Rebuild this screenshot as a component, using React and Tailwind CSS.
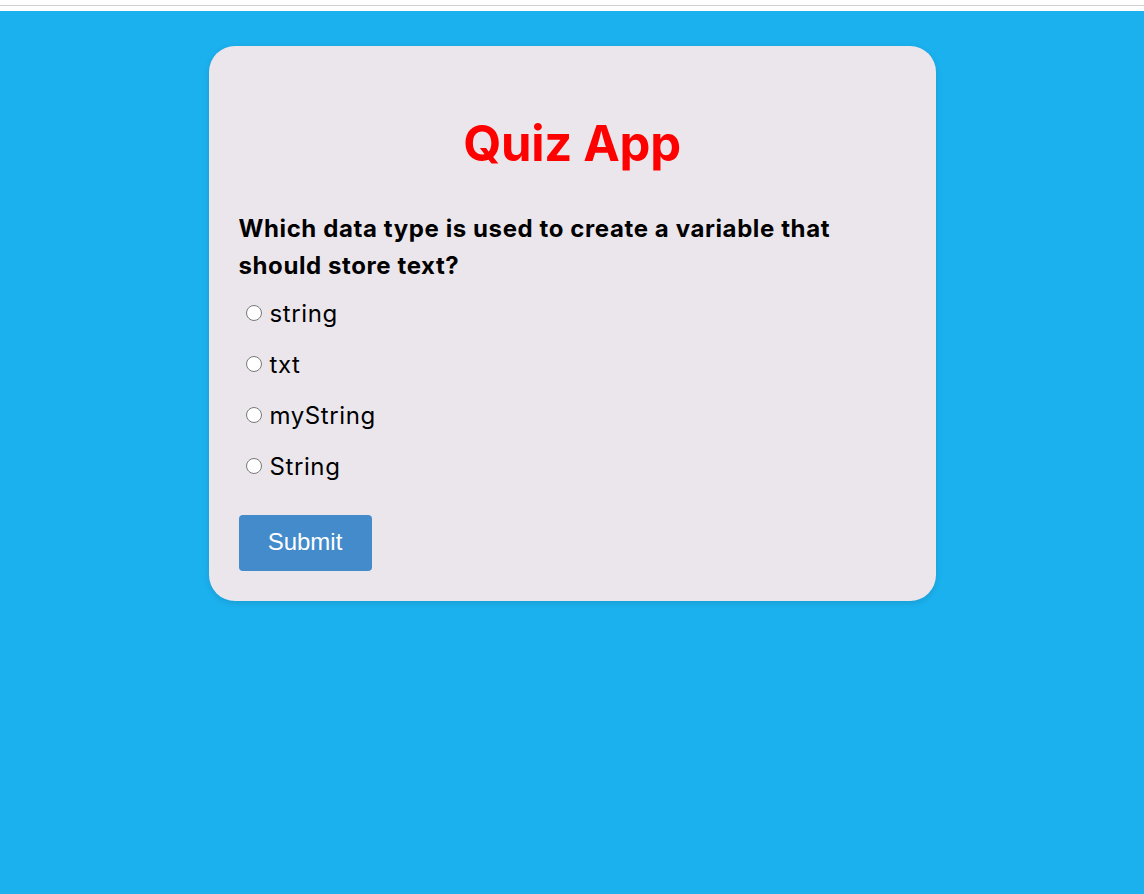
import { useState } from 'react';

const options = ['string', 'txt', 'myString', 'String'];

const App = () => {
  const [answer, setAnswer] = useState(null);

  return (
    <div className="min-h-screen bg-[#1bb1ee] font-['Inter',sans-serif]">
      {/* top strip */}
      <div className="h-[11px] bg-white pt-[5px]">
        <div className="h-[1px] bg-[#d0d0d0]" />
      </div>

      <div className="pt-[35px] flex justify-center">
        <div className="w-[727px] bg-[#ebe6ec] rounded-[26px] shadow-[0_2px_6px_rgba(0,0,0,0.12)] px-[30px] pt-[70px] pb-[30px]">
          <h1 className="text-center text-[#ff0000] font-bold text-[49px] leading-[56px] tracking-[-0.3px]">
            Quiz App
          </h1>

          <h2 className="mt-[38px] max-w-[610px] text-black font-bold text-[24px] leading-[37px] tracking-[0.6px]">
            Which data type is used to create a variable that should store text?
          </h2>

          <ul className="mt-[18px] flex flex-col gap-[27px]">
            {options.map((opt) => (
              <li key={opt} className="flex items-center h-[24px]">
                <input
                  type="radio"
                  name="answer"
                  checked={answer === opt}
                  onChange={() => setAnswer(opt)}
                  className="w-[16px] h-[16px] ml-[7px] mr-[8px] -mt-[3px] accent-[#1a73e8]"
                />
                <label className="text-[24px] text-black leading-[24px] tracking-[0.6px]">{opt}</label>
              </li>
            ))}
          </ul>

          <button className="mt-[36px] w-[133px] h-[56px] bg-[#438bcb] text-white text-[24px] font-['Liberation_Sans',Arial,sans-serif] rounded-[4px] pb-[2px]">
            Submit
          </button>
        </div>
      </div>
    </div>
  );
};

export default App;
